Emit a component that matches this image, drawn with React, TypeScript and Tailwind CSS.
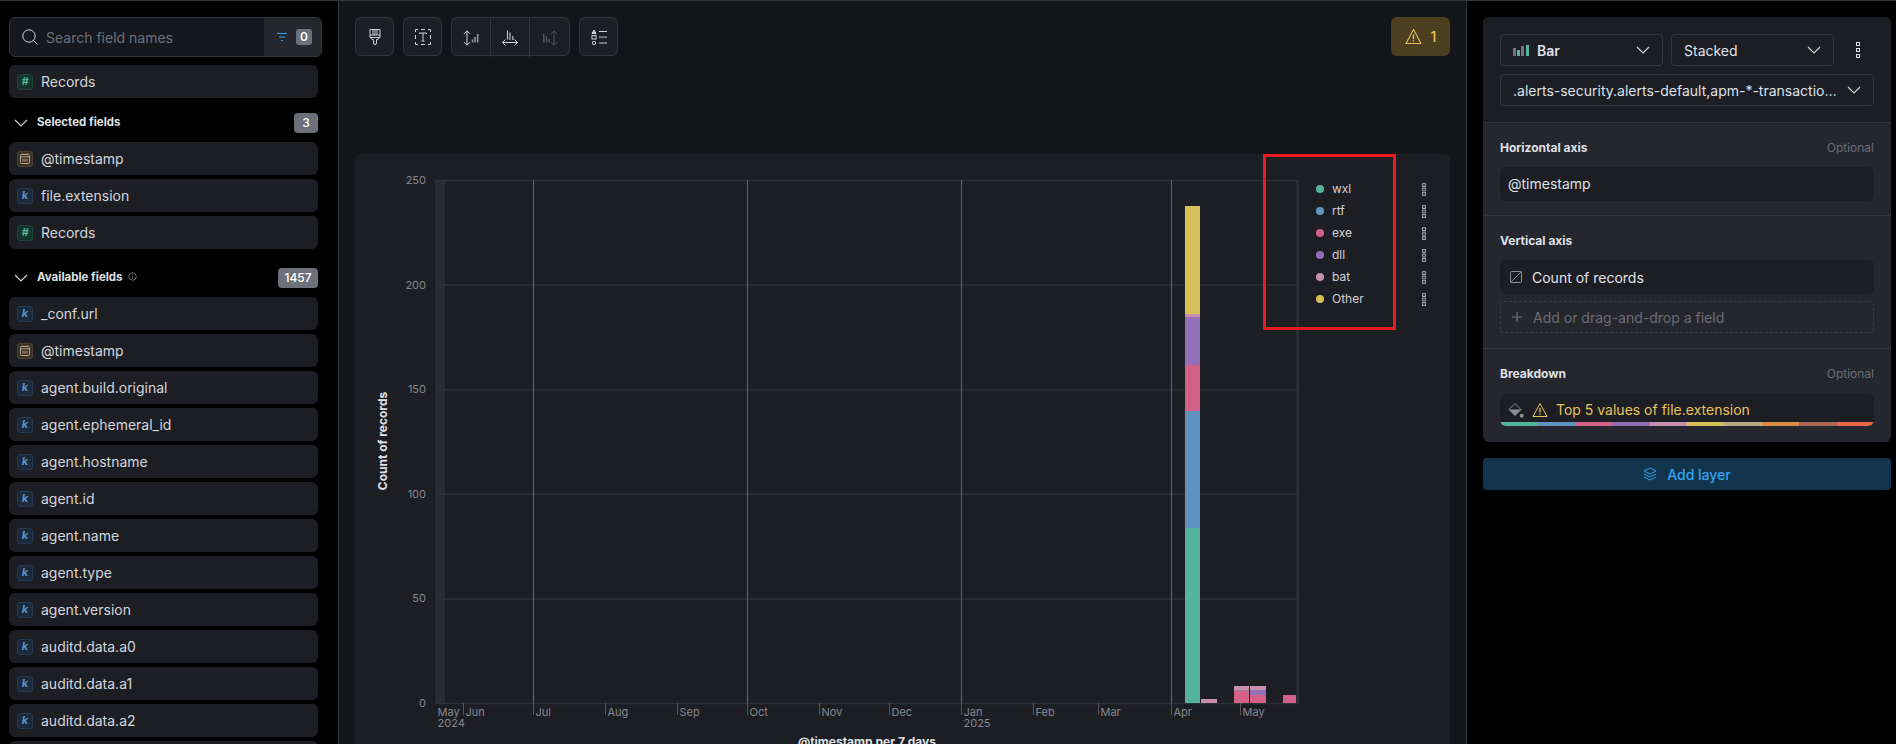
import React from "react";

const font = { fontFamily: "Inter, 'Noto Sans', sans-serif" };

function TypeIcon({ t }: { t: "k" | "n" | "d" }) {
  if (t === "d")
    return (
      <span className="w-4 h-4 rounded-[3px] bg-[#3a3226] border border-[#4b4233] flex items-center justify-center shrink-0">
        <svg width="12" height="12" viewBox="0 0 12 12" fill="none" stroke="#b9a888" strokeWidth="1">
          <rect x="1.5" y="1.5" width="9" height="9" rx="1" />
          <path d="M1.5 3.8h9M3.5 0.5v1M8.5 0.5v1M4 6v2.5M6 6v2.5M8 6v2.5" />
        </svg>
      </span>
    );
  if (t === "n")
    return (
      <span className="w-4 h-4 rounded-[3px] bg-[#15342c] border border-[#1f453a] flex items-center justify-center shrink-0 text-[11px] italic font-bold text-[#54b399] leading-none">
        #
      </span>
    );
  return (
    <span className="w-4 h-4 rounded-[3px] bg-[#1a2a3d] border border-[#243a52] flex items-center justify-center shrink-0 text-[11px] italic font-bold text-[#6092c0] leading-none">
      k
    </span>
  );
}

function Field({ t, name }: { t: "k" | "n" | "d"; name: string }) {
  return (
    <div className="h-[33px] rounded-md bg-[#1d1e24] flex items-center pl-2 gap-2 text-[14px] text-[#d4d6dc] shrink-0">
      <TypeIcon t={t} />
      <span>{name}</span>
    </div>
  );
}

function Chevron({ w = 14, color = "#d4d6dc" }: { w?: number; color?: string }) {
  return (
    <svg width={w} height={w} viewBox="0 0 14 14" fill="none" stroke={color} strokeWidth="1.1">
      <path d="M1 4l6 6 6-6" />
    </svg>
  );
}

function Warn({ color = "#e6c35c", s = 16 }: { color?: string; s?: number }) {
  return (
    <svg width={s} height={s} viewBox="0 0 16 16" fill="none" stroke={color} strokeWidth="1">
      <path d="M8 1.5L15 14.5H1z" strokeLinejoin="round" />
      <path d="M8 6v4.5M8 11.6v1.2" strokeWidth="1.3" />
    </svg>
  );
}

function LegendDots() {
  return (
    <svg width="4" height="13" viewBox="0 0 4 13" fill="#3f4046" stroke="#95979d" strokeWidth="1">
      <rect x="0.5" y="0.5" width="3" height="3" />
      <rect x="0.5" y="5" width="3" height="3" />
      <rect x="0.5" y="9.5" width="3" height="3" />
    </svg>
  );
}

function PanelDots() {
  return (
    <svg width="4" height="16" viewBox="0 0 4 16" fill="none" stroke="#e0e2e8" strokeWidth="1">
      <rect x="0.5" y="0.5" width="3" height="3" />
      <rect x="0.5" y="6.5" width="3" height="3" />
      <rect x="0.5" y="12.5" width="3" height="3" />
    </svg>
  );
}

const selected: [("k" | "n" | "d"), string][] = [
  ["d", "@timestamp"],
  ["k", "file.extension"],
  ["n", "Records"],
];
const available: [("k" | "n" | "d"), string][] = [
  ["k", "_conf.url"],
  ["d", "@timestamp"],
  ["k", "agent.build.original"],
  ["k", "agent.ephemeral_id"],
  ["k", "agent.hostname"],
  ["k", "agent.id"],
  ["k", "agent.name"],
  ["k", "agent.type"],
  ["k", "agent.version"],
  ["k", "auditd.data.a0"],
  ["k", "auditd.data.a1"],
  ["k", "auditd.data.a2"],
];

function Sidebar() {
  return (
    <aside className="w-[338px] shrink-0 pl-[9px] pr-[20px] pt-4 flex flex-col overflow-hidden">
      <div className="w-[313px] h-[40px] rounded-md border border-[#33353d] bg-[#17181d] flex items-center overflow-hidden shrink-0">
        <div className="flex-1 flex items-center pl-3 gap-2">
          <svg width="16" height="16" viewBox="0 0 16 16" fill="none" stroke="#d4d6dc" strokeWidth="1">
            <circle cx="7" cy="7" r="6.2" />
            <path d="M11.5 11.5l4 4" />
          </svg>
          <span className="text-[14px] text-[#6b717c]">Search field names</span>
        </div>
        <div className="w-[57px] h-full bg-[#25272e] flex items-center justify-end pr-[9px] gap-[8px]">
          <svg width="12" height="10" viewBox="0 0 12 10" fill="none" stroke="#36a2ef" strokeWidth="1">
            <path d="M1 1.5h10M3 5h6M5 8.5h2" />
          </svg>
          <span className="w-4 h-4 rounded-[3px] bg-[#6d7079] text-[12px] font-semibold text-white flex items-center justify-center">0</span>
        </div>
      </div>
      <div className="mt-2">
        <Field t="n" name="Records" />
      </div>
      <div className="h-[44px] pt-[6px] flex items-center shrink-0">
        <span className="ml-[5px] mr-[9px]"><Chevron /></span>
        <span className="text-[11.5px] font-bold text-[#dfe1e6] flex-1">Selected fields</span>
        <span className="w-6 h-5 rounded-[4px] bg-[#6d7079] text-[12px] font-medium text-white flex items-center justify-center">3</span>
      </div>
      <div className="flex flex-col gap-1">
        {selected.map(([t, n]) => (
          <Field key={n} t={t} name={n} />
        ))}
      </div>
      <div className="h-[48px] pt-[10px] flex items-center shrink-0">
        <span className="ml-[5px] mr-[9px]"><Chevron /></span>
        <span className="text-[11.5px] font-bold text-[#dfe1e6]">Available fields</span>
        <svg className="ml-[5px] mb-1" width="9" height="9" viewBox="0 0 10 10" fill="none" stroke="#8d8f96" strokeWidth="0.8">
          <circle cx="5" cy="5" r="4.2" />
          <path d="M5 4.4v3M5 2.5v1" />
        </svg>
        <span className="ml-auto w-10 h-5 rounded-[4px] bg-[#6d7079] text-[12px] font-medium text-white flex items-center justify-center">1457</span>
      </div>
      <div className="flex flex-col gap-1">
        {available.map(([t, n], i) => (
          <Field key={n + i} t={t} name={n} />
        ))}
        <div className="h-[33px] rounded-md bg-[#1d1e24] shrink-0" />
      </div>
    </aside>
  );
}

function ToolBtn({ children, cls = "" }: { children: React.ReactNode; cls?: string }) {
  return <div className={"w-[39px] h-[39px] flex items-center justify-center " + cls}>{children}</div>;
}

const boxCls = "rounded-md border border-[#33353d] bg-[#1d1e24]";
const stroke = "#d0d2d8";

function Toolbar() {
  return (
    <div className="h-[39px] flex items-center gap-[9px] shrink-0">
      <ToolBtn cls={boxCls}>
        <svg width="16" height="16" viewBox="0 0 16 16" fill="none" stroke={stroke} strokeWidth="1">
          <path d="M3 .5h10v8H3zM3 6h10M6 .5V6M8 .5V6M10 .5V6M3.5 8.5l1.5 2h1.5v3.5a1.5 1.5 0 0 0 3 0v-3.5H11l1.5-2" />
        </svg>
      </ToolBtn>
      <ToolBtn cls={boxCls}>
        <svg width="16" height="16" viewBox="0 0 16 16" fill="none" stroke={stroke} strokeWidth="1">
          <path d="M.5 3V.5H3M6 .5h4M13 .5h2.5V3M15.5 6v4M15.5 13v2.5H13M10 15.5H6M3 15.5H.5V13M.5 10V6" />
          <path d="M4.5 5V4h7v1M8 4v8M6.5 12h3" />
        </svg>
      </ToolBtn>
      <div className={"flex h-[39px] " + boxCls}>
        <ToolBtn cls="border-r border-[#33353d]">
          <svg width="16" height="16" viewBox="0 0 16 16" fill="none" stroke={stroke} strokeWidth="1">
            <path d="M4 1v14M1 3.8L4 .8l3 3M1 12.2l3 3 3-3" />
            <path d="M9.5 12.5V9.5M12 12.5V7M14.7 12.5V4" strokeWidth="1.5" stroke="#9b9da3" />
          </svg>
        </ToolBtn>
        <ToolBtn cls="border-r border-[#33353d]">
          <svg width="16" height="16" viewBox="0 0 16 16" fill="none" stroke={stroke} strokeWidth="1">
            <path d="M.5 12.5h15M3.5 9.5l-3 3 3 3M12.5 9.5l3 3-3 3M5.5 .5v9" />
            <path d="M8 10V2.5M10.8 10V6" strokeWidth="1.5" stroke="#9b9da3" />
          </svg>
        </ToolBtn>
        <ToolBtn>
          <svg width="16" height="16" viewBox="0 0 16 16" fill="none" stroke="#55575e" strokeWidth="1">
            <path d="M12 1v14M9 3.8l3-3 3 3M9 12.2l3 3 3-3" />
            <path d="M1.8 12.5V4M4.4 12.5V6.5M7 12.5V9" strokeWidth="1.5" />
          </svg>
        </ToolBtn>
      </div>
      <ToolBtn cls={boxCls}>
        <svg width="16" height="16" viewBox="0 0 16 16" fill="none" stroke={stroke} strokeWidth="1">
          <path d="M1 4.5L3 1l2 3.5z" fill={stroke} />
          <rect x="1" y="6.5" width="4" height="3.5" />
          <circle cx="3" cy="14" r="1.7" />
          <path d="M8 2.5h8M8 14h8" />
          <path d="M8 8.2h8" strokeWidth="2" stroke="#74767d" />
        </svg>
      </ToolBtn>
      <div className="ml-auto w-[59px] h-[39px] rounded-md bg-[#4c3f20] flex items-center justify-center gap-[9px] text-[14px] font-medium text-[#e6c35c]">
        <Warn s={17} />
        <span>1</span>
      </div>
    </div>
  );
}

const L = 435, R = 1299, T = 180, B = 703;
const OX = 355, OY = 154;
const majorX = [533, 747, 961, 1171];
const ticks = [463, 533, 605, 677, 747, 819, 889, 961, 1033, 1098, 1171, 1240];
const months: [number, string][] = [
  [437.5, "May"],
  [465.5, "Jun"],
  [535.5, "Jul"],
  [607.5, "Aug"],
  [679.5, "Sep"],
  [749.5, "Oct"],
  [821.5, "Nov"],
  [891.5, "Dec"],
  [963.5, "Jan"],
  [1035.5, "Feb"],
  [1100.5, "Mar"],
  [1173.5, "Apr"],
  [1242.5, "May"],
];
const C = { wxl: "#54b399", rtf: "#6092c0", exe: "#d36086", dll: "#9170b8", bat: "#ca8eae", oth: "#d6bf57" };
const rects: [number, number, number, number, string][] = [
  [1185, 206, 15, 108, C.oth],
  [1185, 314, 15, 3, C.bat],
  [1185, 317, 15, 48, C.dll],
  [1185, 365, 15, 46, C.exe],
  [1185, 411, 15, 117, C.rtf],
  [1185, 528, 15, 175, C.wxl],
  [1201, 699, 16, 4, C.bat],
  [1234, 686, 15, 4, C.bat],
  [1234, 690, 15, 1, "#a27a90"],
  [1234, 691, 15, 12, C.exe],
  [1250, 686, 16, 4, C.bat],
  [1250, 690, 16, 5, C.dll],
  [1250, 695, 16, 8, C.exe],
  [1283, 695, 13, 8, C.exe],
];

function Chart() {
  const ys = [0, 50, 100, 150, 200, 250];
  const py = (v: number) => B - ((B - T) * v) / 250;
  return (
    <svg width="1095" height="590" viewBox={`${OX} ${OY} 1095 590`} className="block absolute left-0 top-0" style={{ ...font }}>
      <rect x={L} y={T} width="10" height={B - T} fill="#2a2c33" />
      <rect x={1296} y={T} width="3" height={B - T} fill="#2a2c33" />
      {ys.map((v) => (
        <g key={v}>
          <line x1={L} x2={R} y1={py(v) + 0.5} y2={py(v) + 0.5} stroke="#2f3138" strokeWidth="1.5" />
          <text x={426} y={py(v) + 4} textAnchor="end" fontSize="11" fill="#85878e">{v}</text>
        </g>
      ))}
      {majorX.map((x) => (
        <line key={x} x1={x + 0.5} x2={x + 0.5} y1={T} y2={B} stroke="#5b5d63" strokeWidth="1.2" />
      ))}
      {ticks.map((x) => (
        <line key={x} x1={x + 0.5} x2={x + 0.5} y1={B} y2={715} stroke="#55575d" />
      ))}
      {months.map(([x, m], i) => (
        <text key={i} x={x} y={716} fontSize="11" fill="#85878e">{m}</text>
      ))}
      <text x={437.5} y={727} fontSize="11" fill="#85878e">2024</text>
      <text x={963.5} y={727} fontSize="11" fill="#85878e">2025</text>
      {rects.map(([x, y, w, h, c], i) => (
        <rect key={i} x={x} y={y} width={w} height={h} fill={c} />
      ))}
      <text transform="rotate(-90 387 441)" x={387} y={441} textAnchor="middle" fontSize="12" fontWeight="700" fill="#dfe1e6">Count of records</text>
      <text x={867} y={746} textAnchor="middle" fontSize="12" fontWeight="700" fill="#dfe1e6">@timestamp per 7 days</text>
    </svg>
  );
}

const legend: [string, string][] = [
  ["wxl", C.wxl],
  ["rtf", C.rtf],
  ["exe", C.exe],
  ["dll", C.dll],
  ["bat", C.bat],
  ["Other", C.oth],
];

function Main() {
  return (
    <main className="w-[1129px] shrink-0 bg-[#141519] border-l border-r border-[#33353d] pl-[16px] pr-[16px] pt-[16px] flex flex-col overflow-hidden">
      <Toolbar />
      <div className="mt-[98px] flex-1 relative rounded-t-md bg-[#1d1e24] overflow-hidden">
        <Chart />
        <div className="absolute top-0 left-[908px] w-[133px] h-[176px] border-[3px] border-[#e81c1c]" />
        <div className="ml-[961px] pt-[24px] w-[110px] relative flex flex-col">
          {legend.map(([n, c]) => (
            <div key={n} className="h-[22px] flex items-center text-[12px] text-[#d0d2d8]">
              <span className="w-2 h-2 rounded-full" style={{ backgroundColor: c }} />
              <span className="ml-2 flex-1">{n}</span>
              <LegendDots />
            </div>
          ))}
        </div>
      </div>
    </main>
  );
}

const palette = ["#54b399", "#6092c0", "#d36086", "#9170b8", "#ca8eae", "#d6bf57", "#b9a888", "#da8b45", "#aa6556", "#e7664c"];

function Right() {
  return (
    <aside className="flex-1 pl-[16px] pr-[5px] pt-[16px] flex flex-col">
      <div className="w-[408px] rounded-md bg-[#25262e] overflow-hidden">
        <div className="bg-[#1d1e24] border-b border-[#33353d] h-[106px] px-[17px] pt-[17px] flex flex-col gap-[8px]">
          <div className="flex items-center gap-[8px]">
            <div className="w-[163px] h-[32px] rounded-[4px] border border-[#33353d] flex items-center pl-3 pr-[12px] text-[14px] text-[#dde1e8]">
              <svg width="16" height="12" viewBox="0 0 16 12" className="mr-2">
                <rect x="0" y="4" width="3" height="8" fill="#74767d" />
                <rect x="4" y="6" width="3" height="6" fill="#54b399" />
                <rect x="8" y="2" width="3" height="10" fill="#74767d" />
                <rect x="13" y="1" width="3" height="11" fill="#54b399" />
              </svg>
              <span className="font-semibold flex-1">Bar</span>
              <Chevron />
            </div>
            <div className="w-[163px] h-[32px] rounded-[4px] border border-[#33353d] flex items-center pl-3 pr-[12px] text-[14px] text-[#dde1e8]">
              <span className="flex-1">Stacked</span>
              <Chevron />
            </div>
            <span className="ml-[14px] flex"><PanelDots /></span>
          </div>
          <div className="w-[374px] h-[32px] rounded-[4px] border border-[#33353d] flex items-center pl-3 pr-[12px] text-[14px] text-[#dde1e8]">
            <span className="flex-1 truncate">.alerts-security.alerts-default,apm-*-transaction*,auditbeat-*</span>
            <span className="ml-2 flex"><Chevron /></span>
          </div>
        </div>
        <Section title="Horizontal axis" optional h="h-[93px]">
          <Box>
            <span className="text-[14px] text-[#dde1e8] pb-[1px]">@timestamp</span>
          </Box>
        </Section>
        <Section title="Vertical axis" h="h-[133px]">
          <Box>
            <svg width="12" height="12" viewBox="0 0 12 12" fill="none" stroke="#8d8f96" strokeWidth="1" className="mx-[2px]">
              <rect x="0.5" y="0.5" width="11" height="11" rx="1" />
              <path d="M0.5 11.5l11-11" />
            </svg>
            <span className="ml-[8px] text-[14px] text-[#e0e2e8]">Count of records</span>
          </Box>
          <div className="mt-[7px] h-[32px] w-[374px] rounded-[4px] border border-dashed border-[#3a3c44] flex items-center pl-[10px] text-[14px] text-[#6b6e76]">
            <svg width="12" height="12" viewBox="0 0 12 12" fill="none" stroke="#74767d" strokeWidth="1.2">
              <path d="M6 1v10M1 6h10" />
            </svg>
            <span className="ml-[10px]">Add or drag-and-drop a field</span>
          </div>
        </Section>
        <div className="pt-[16px] px-[17px] pb-[16px]">
          <div className="flex items-center justify-between h-[18px]">
            <span className="text-[12px] font-bold text-[#dfe1e6]">Breakdown</span>
            <span className="text-[12px] text-[#6b6e76]">Optional</span>
          </div>
          <div className="mt-[11px] w-[374px] h-[32px] rounded-md bg-[#1d1e24] overflow-hidden flex flex-col">
            <div className="flex-1 flex items-center pl-2 pt-[3px]">
              <svg width="16" height="16" viewBox="0 0 16 16" fill="#8d8f96">
                <path d="M7 1.5L13 7.5L7 13.5L1 7.5z" fill="none" stroke="#8d8f96" strokeWidth="1" />
                <path d="M1 7.5h12L7 13.5z" />
                <circle cx="13.6" cy="13.8" r="2" />
              </svg>
              <span className="ml-[8px] flex"><Warn s={16} /></span>
              <span className="ml-[8px] text-[14px] text-[#e6c35c]">Top 5 values of file.extension</span>
            </div>
            <div className="h-[4px] flex shrink-0">
              {palette.map((c) => (
                <span key={c} className="flex-1" style={{ backgroundColor: c }} />
              ))}
            </div>
          </div>
        </div>
      </div>
      <div className="mt-[16px] w-[408px] h-[32px] rounded-[4px] bg-[#12344c] flex items-center justify-center gap-[10px] text-[14px] font-medium text-[#36a2ef]">
        <svg width="14" height="14" viewBox="0 0 14 14" fill="none" stroke="#36a2ef" strokeWidth="1">
          <path d="M7 1l6 3-6 3-6-3zM1 7l6 3 6-3M1 10l6 3 6-3" />
        </svg>
        <span>Add layer</span>
      </div>
    </aside>
  );
}

function Box({ children }: { children: React.ReactNode }) {
  return <div className="w-[374px] h-[34px] rounded-md bg-[#1d1e24] flex items-center pl-2">{children}</div>;
}

function Section({ title, optional, h, children }: { title: string; optional?: boolean; h: string; children: React.ReactNode }) {
  return (
    <div className={"px-[17px] pt-[16px] border-b border-[#33353d] " + h}>
      <div className="flex items-center justify-between h-[18px] mb-[10px]">
        <span className="text-[12px] font-bold text-[#dfe1e6]">{title}</span>
        {optional && <span className="text-[12px] text-[#6b6e76]">Optional</span>}
      </div>
      {children}
    </div>
  );
}

export default function App() {
  return (
    <div className="w-[1896px] h-[744px] bg-black border-t border-[#33353d] flex overflow-hidden" style={font}>
      <Sidebar />
      <Main />
      <Right />
    </div>
  );
}
